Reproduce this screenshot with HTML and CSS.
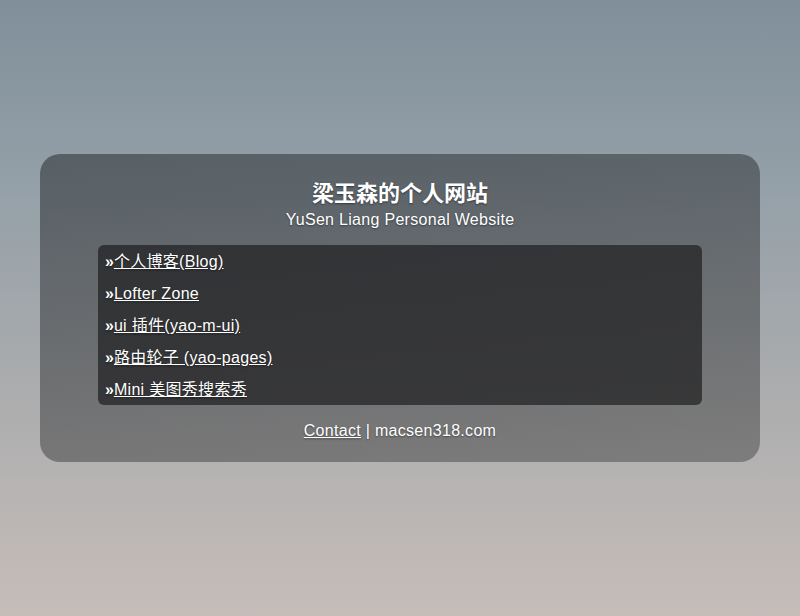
FILE: index.html
```html
<!DOCTYPE html>
<html lang="zh-CN">
<head>
<meta charset="utf-8">
<title>梁玉森的个人网站</title>
<link rel="stylesheet" href="styles.css">
</head>
<body>
<main class="page">
  <section class="card">
    <h1 class="title">梁玉森的个人网站</h1>
    <p class="subtitle">YuSen Liang Personal Website</p>
    <ul class="links">
      <li class="item"><span class="mark">»</span><a href="#">个人博客(Blog)</a></li>
      <li class="item"><span class="mark">»</span><a href="#">Lofter Zone</a></li>
      <li class="item"><span class="mark">»</span><a href="#">ui 插件(yao-m-ui)</a></li>
      <li class="item"><span class="mark">»</span><a href="#">路由轮子 (yao-pages)</a></li>
      <li class="item"><span class="mark">»</span><a href="#">Mini 美图秀搜索秀</a></li>
    </ul>
    <p class="footer"><a href="#">Contact</a> | macsen318.com</p>
  </section>
</main>
</body>
</html>
```

FILE: styles.css
```css
html, body {
  margin: 0;
  padding: 0;
  height: 100%;
}
body {
  font-family: "Liberation Sans", "Noto Sans CJK SC", sans-serif;
  color: #fff;
  background: linear-gradient(180deg, #808f9a 0%, #94a0a8 30%, #a9abad 60%, #c6bdb9 100%);
  min-height: 616px;
}
.page {
  padding: 154px 40px 0;
}
.card {
  background: linear-gradient(170deg, rgba(40,44,48,0.55) 0%, rgba(60,60,60,0.45) 100%);
  border-radius: 20px;
  padding: 25px 58px 19px;
  text-align: center;
  text-shadow: 0 1px 2px rgba(0,0,0,0.45);
}
.title {
  margin: 0;
  font-size: 22px;
  line-height: 30px;
  font-weight: bold;
}
.subtitle {
  margin: 0;
  font-size: 16px;
  line-height: 22px;
  letter-spacing: 0.3px;
}
.links {
  list-style: none;
  margin: 14px 0 0;
  padding: 1px 7px 0;
  height: 159px;
  background: rgba(30,30,32,0.7);
  border-radius: 6px;
  text-align: left;
}
.item {
  font-size: 16px;
  line-height: 32px;
  letter-spacing: 0.3px;
}
.mark {
  font-weight: bold;
  letter-spacing: 0;
}
a {
  color: #fff;
  text-decoration: underline;
}
.footer {
  margin: 14px 0 0;
  font-size: 16px;
  line-height: 24px;
  letter-spacing: 0.3px;
}
```
